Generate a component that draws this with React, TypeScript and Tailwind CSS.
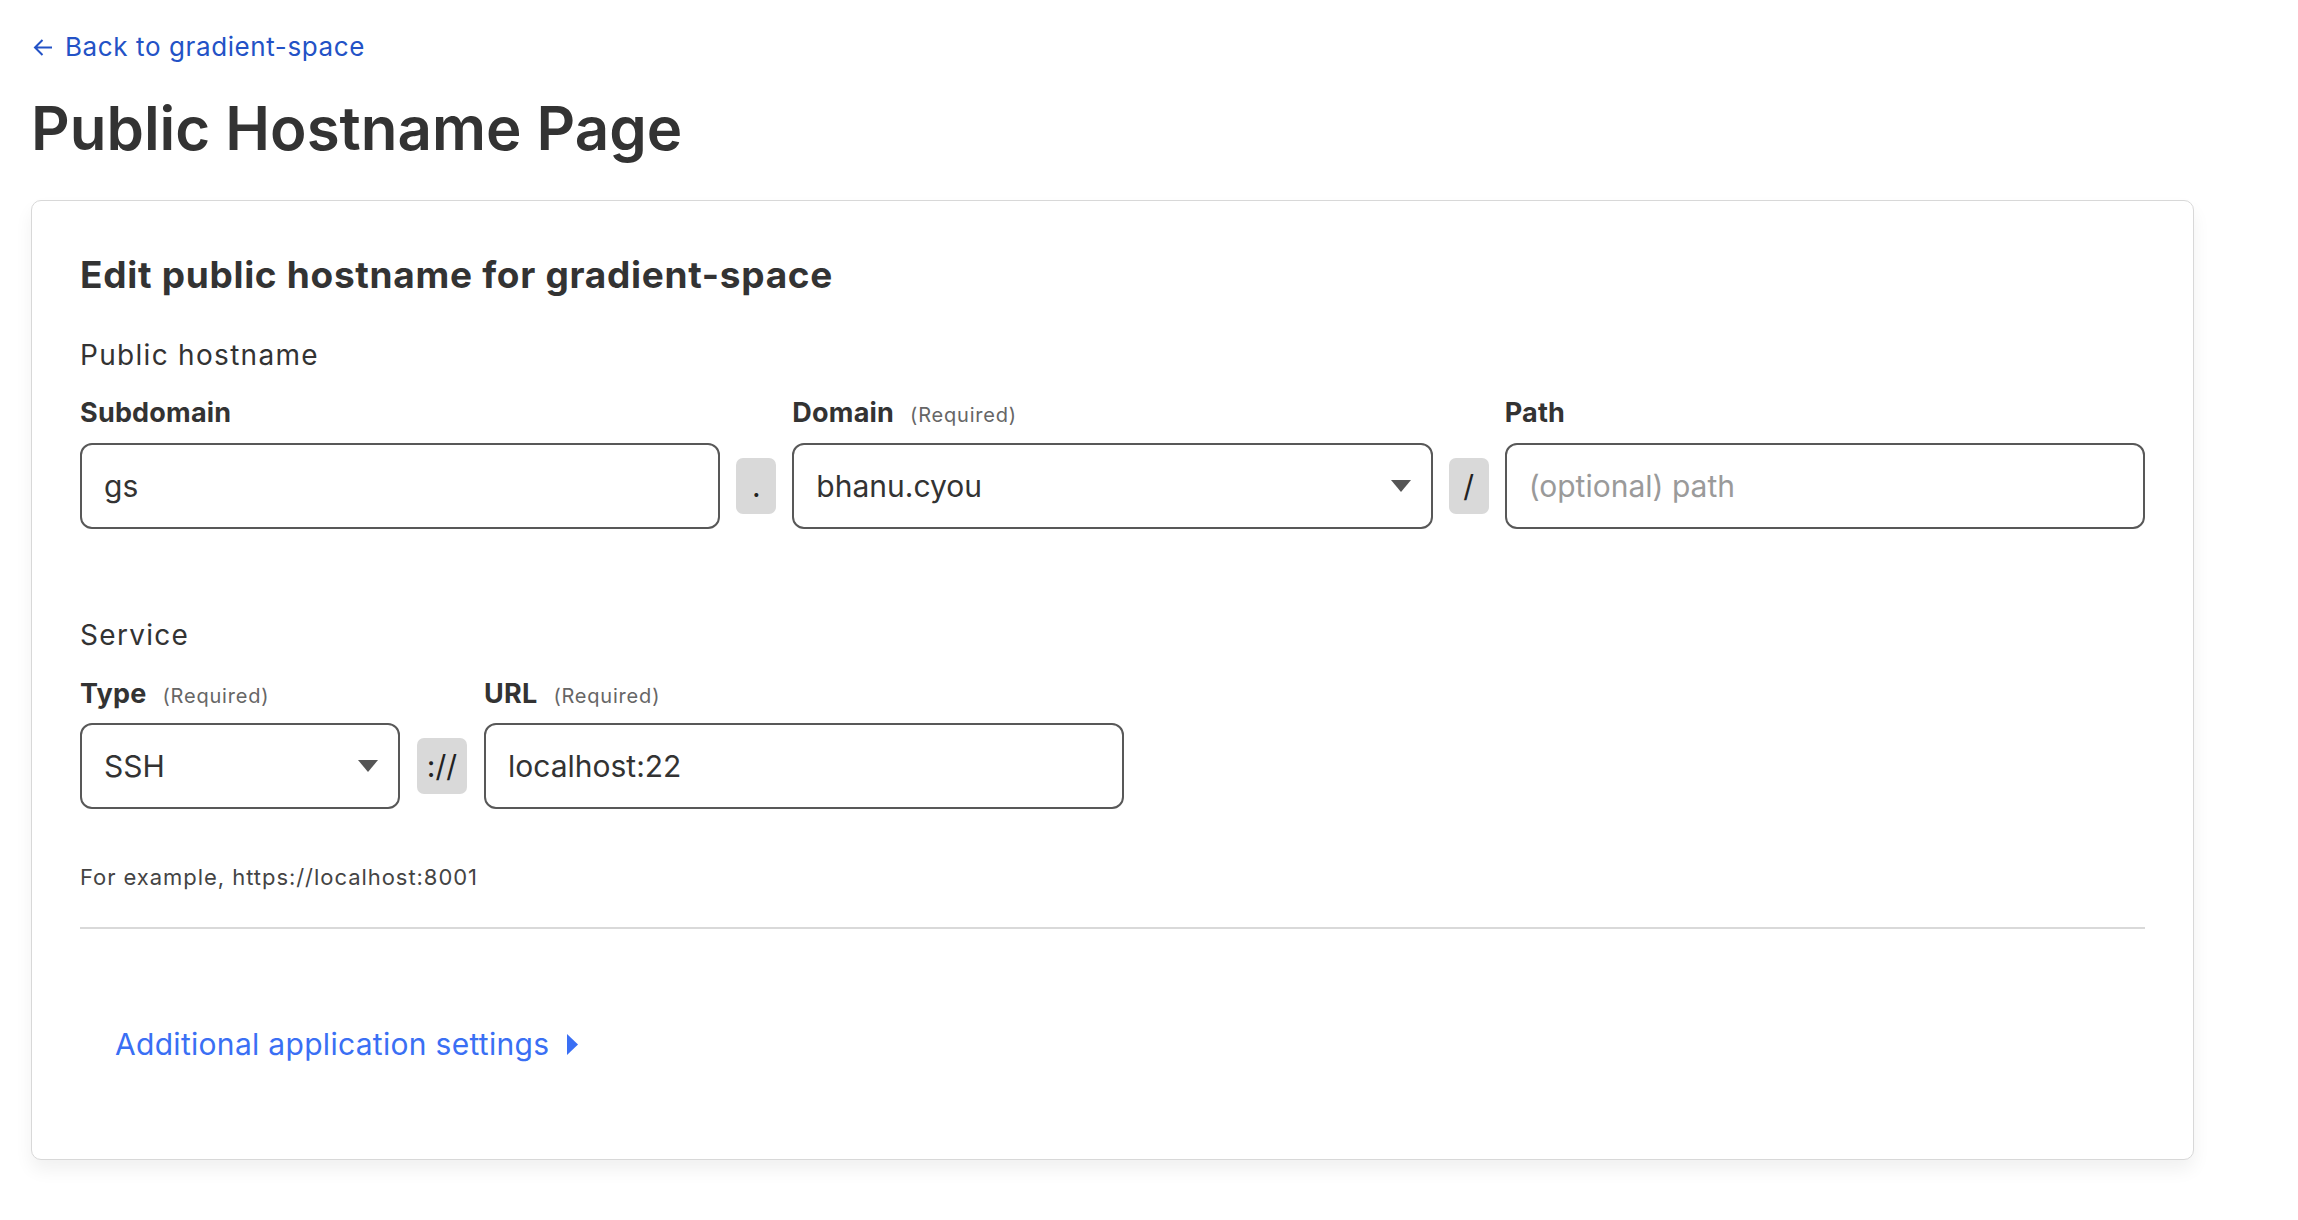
import { ReactNode } from 'react';

function Label({ text, required }: { text: string; required?: boolean }) {
    return (
        <div className="flex items-baseline h-[27px]">
            <span className="text-[27px] leading-none font-bold tracking-[0.2px] text-[#333]">{text}</span>
            {required && <span className="ml-[16px] text-[20px] leading-none tracking-[0.8px] text-[#666]">(Required)</span>}
        </div>
    );
}

function TextBox({ value, placeholder }: { value?: string; placeholder?: string }) {
    return (
        <div className="h-[86px] rounded-[12px] border-2 border-[#585858] bg-white flex items-center px-[22px]">
            {value ? (
                <span className="text-[30px] leading-none text-[#333]">{value}</span>
            ) : (
                <span className="text-[30px] leading-none text-[#9a9a9a]">{placeholder}</span>
            )}
        </div>
    );
}

function SelectBox({ value }: { value: string }) {
    return (
        <div className="h-[86px] rounded-[12px] border-2 border-[#585858] bg-white flex items-center justify-between pl-[22px] pr-[20px]">
            <span className="text-[30px] leading-none text-[#333]">{value}</span>
            <svg width="20" height="12" viewBox="0 0 20 12">
                <path d="M0 0H20L10 12Z" fill="#555" />
            </svg>
        </div>
    );
}

function Sep({ children, wide }: { children: ReactNode; wide?: boolean }) {
    return (
        <div
            className={
                wide
                    ? 'self-center w-[50px] h-[56px] rounded-[7px] bg-[#d9d9d9] flex items-center justify-center text-[30px] leading-none text-[#222]'
                    : 'self-center w-[40px] h-[56px] rounded-[7px] bg-[#d9d9d9] flex items-center justify-center text-[30px] leading-none text-[#222]'
            }
        >
            {children}
        </div>
    );
}

export default function App() {
    return (
        <div className="min-h-screen bg-white pt-[34px] pb-[40px] font-['Inter','Liberation_Sans',sans-serif] text-[#333]">
            {/* back link */}
            <a className="ml-[33px] flex items-center h-[26px] text-[26px] leading-none tracking-[0.6px] text-[#2352c6] w-fit">
                <svg width="20" height="17" viewBox="0 0 20 17" className="mr-[12px]">
                    <path d="M19 8.5H2M9.5 1L2 8.5L9.5 16" fill="none" stroke="#2352c6" strokeWidth="2" />
                </svg>
                Back to gradient-space
            </a>

            <h1 className="ml-[31px] mt-[38px] text-[60px] leading-none font-semibold tracking-[0px] text-[#333]">
                Public Hostname Page
            </h1>

            {/* card */}
            <div className="ml-[31px] mt-[42px] w-[2163px] rounded-[10px] border border-[#d8d8d8] bg-white px-[48px] pt-[55px] pb-[100px] shadow-[0_10px_18px_rgba(0,0,0,0.06)]">
                <h2 className="text-[37px] leading-none font-bold tracking-[0.7px] text-[#333]">
                    Edit public hostname for gradient-space
                </h2>

                <div className="mt-[48px] text-[28px] leading-none tracking-[1.3px] text-[#333]">Public hostname</div>

                <div className="mt-[30px] grid grid-cols-[1fr_40px_1fr_40px_1fr] gap-x-[16px]">
                    <Label text="Subdomain" />
                    <div />
                    <Label text="Domain" required />
                    <div />
                    <Label text="Path" />
                </div>
                <div className="mt-[17px] grid grid-cols-[1fr_40px_1fr_40px_1fr] gap-x-[16px]">
                    <TextBox value="gs" />
                    <Sep>.</Sep>
                    <SelectBox value="bhanu.cyou" />
                    <Sep>/</Sep>
                    <TextBox placeholder="(optional) path" />
                </div>

                <div className="mt-[92px] text-[28px] leading-none tracking-[1.3px] text-[#333]">Service</div>

                <div className="mt-[31px] grid grid-cols-[320px_50px_640px] gap-x-[17px]">
                    <Label text="Type" required />
                    <div />
                    <Label text="URL" required />
                </div>
                <div className="mt-[16px] grid grid-cols-[320px_50px_640px] gap-x-[17px]">
                    <SelectBox value="SSH" />
                    <Sep wide>://</Sep>
                    <TextBox value="localhost:22" />
                </div>

                <p className="mt-[57px] text-[22px] leading-none tracking-[0.95px] text-[#444]">For example, https://localhost:8001</p>

                <div className="mt-[39px] h-[2px] bg-[#d9d9d9]" />

                <a className="mt-[100px] ml-[35px] flex items-center w-fit h-[30px] text-[30px] leading-none tracking-[0.3px] text-[#3a6ff4]">
                    Additional application settings
                    <svg width="11" height="21" viewBox="0 0 11 21" className="ml-[18px]">
                        <path d="M0 0L11 10.5L0 21Z" fill="#3a6ff4" />
                    </svg>
                </a>
            </div>
        </div>
    );
}
